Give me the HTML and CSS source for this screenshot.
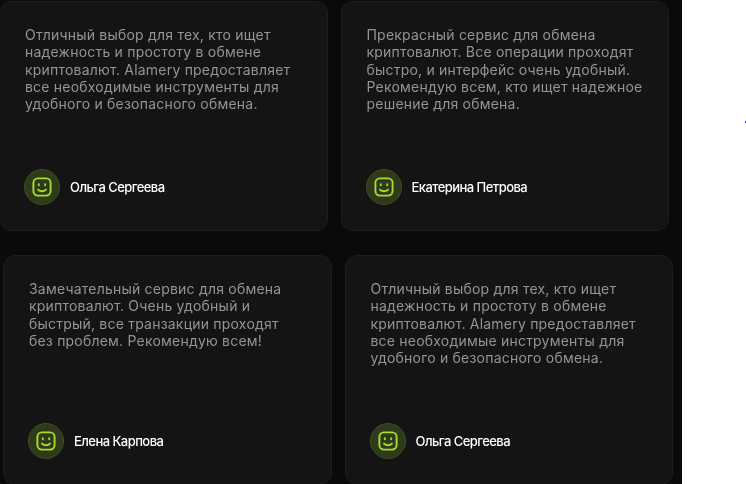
FILE: index.html
```html
<!DOCTYPE html>
<html lang="ru">
<head>
  <meta charset="UTF-8">
  <title>Отзывы</title>
  <link rel="stylesheet" href="styles.css">
</head>
<body>
  <div class="wall">
    <div class="row row-top">
      <div class="card">
        <p class="quote">Отличный выбор для тех, кто ищет надежность и простоту в обмене криптовалют. Alamery предоставляет все необходимые инструменты для удобного и безопасного обмена.</p>
        <div class="author">
          <span class="avatar"><svg viewBox="0 0 24 24"><rect x="3.4" y="3.4" width="17.2" height="17.2" rx="4.5"/><path d="M8.8 9.2v1M15.2 9.2v1M8 14.6c2.2 2.2 5.8 2.2 8 0"/></svg></span>
          <span class="name">Ольга Сергеева</span>
        </div>
      </div>
      <div class="card">
        <p class="quote">Прекрасный сервис для обмена криптовалют. Все операции проходят быстро, и интерфейс очень удобный. Рекомендую всем, кто ищет надежное решение для обмена.</p>
        <div class="author">
          <span class="avatar"><svg viewBox="0 0 24 24"><rect x="3.4" y="3.4" width="17.2" height="17.2" rx="4.5"/><path d="M8.8 9.2v1M15.2 9.2v1M8 14.6c2.2 2.2 5.8 2.2 8 0"/></svg></span>
          <span class="name">Екатерина Петрова</span>
        </div>
      </div>
    </div>
    <div class="row row-bottom">
      <div class="card">
        <p class="quote">Замечательный сервис для обмена криптовалют. Очень удобный и быстрый, все транзакции проходят без проблем. Рекомендую всем!</p>
        <div class="author">
          <span class="avatar"><svg viewBox="0 0 24 24"><rect x="3.4" y="3.4" width="17.2" height="17.2" rx="4.5"/><path d="M8.8 9.2v1M15.2 9.2v1M8 14.6c2.2 2.2 5.8 2.2 8 0"/></svg></span>
          <span class="name">Елена Карпова</span>
        </div>
      </div>
      <div class="card">
        <p class="quote">Отличный выбор для тех, кто ищет надежность и простоту в обмене криптовалют. Alamery предоставляет все необходимые инструменты для удобного и безопасного обмена.</p>
        <div class="author">
          <span class="avatar"><svg viewBox="0 0 24 24"><rect x="3.4" y="3.4" width="17.2" height="17.2" rx="4.5"/><path d="M8.8 9.2v1M15.2 9.2v1M8 14.6c2.2 2.2 5.8 2.2 8 0"/></svg></span>
          <span class="name">Ольга Сергеева</span>
        </div>
      </div>
    </div>
  </div>
  <span class="speck"></span>
</body>
</html>
```

FILE: styles.css
```css
html, body {
  margin: 0;
  height: 100%;
  overflow: hidden;
  background: #fff;
}
.wall {
  width: 682px;
  height: 484px;
  background: #0a0a0a;
  overflow: hidden;
  font-family: Inter, "Noto Sans", sans-serif;
}
.row {
  display: flex;
  gap: 13px;
  will-change: transform;
}
.row-top {
  margin: 1px 0 24px -1.4px;
}
.row-bottom {
  margin-left: 3px;
}
.card {
  box-sizing: border-box;
  width: 328.5px;
  height: 230px;
  padding: 24px 25px 25px;
  display: flex;
  flex-direction: column;
  justify-content: space-between;
  background: #141414;
  border: 1px solid #1e1e1e;
  border-radius: 12px;
}
.quote {
  margin: 0;
  font-size: 14px;
  line-height: 17.3px;
  letter-spacing: 0.21px;
  color: #949494;
}
.author {
  display: flex;
  align-items: center;
  gap: 10px;
  margin-left: -1px;
}
.avatar {
  box-sizing: border-box;
  width: 36px;
  height: 36px;
  display: flex;
  align-items: center;
  justify-content: center;
  background: #2f3a1a;
  border: 1px solid #3f4d22;
  border-radius: 50%;
}
.avatar svg {
  width: 24px;
  height: 24px;
  fill: none;
  stroke: #a6dc2f;
  stroke-width: 1.9;
  stroke-linecap: round;
}
.name {
  font-size: 13px;
  font-weight: 500;
  letter-spacing: -0.55px;
  color: #fff;
}
.speck {
  position: absolute;
  left: 745px;
  top: 121px;
  width: 1px;
  height: 2px;
  background: #2030e0;
}
```
